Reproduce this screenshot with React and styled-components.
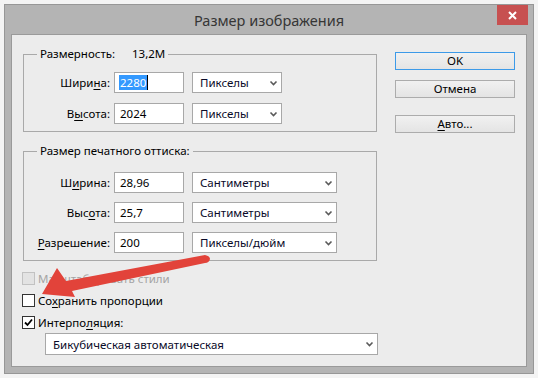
import React from "react";
import styled, { createGlobalStyle } from "styled-components";

const GlobalStyle = createGlobalStyle`
  html, body {
    margin: 0;
    padding: 0;
    background: #f4f4f4;
  }
  body {
    font-family: "Noto Sans", "Open Sans", sans-serif;
  }
  u {
    text-decoration-thickness: 1px;
    text-underline-offset: 2px;
  }
`;

const Page = styled.div`
  position: relative;
  width: 538px;
  height: 378px;
  padding: 4px;
  box-sizing: border-box;
  background: #f4f4f4;
  overflow: hidden;
`;

const Window = styled.div`
  width: 530px;
  height: 370px;
  box-sizing: border-box;
  border: 1px solid #979797;
  background: #b4b4b4;
  padding: 0 6px 6px;
  display: flex;
  flex-direction: column;
`;

const TitleBar = styled.div`
  height: 29px;
  margin: 0 -6px;
  display: grid;
  grid-template-columns: 1fr auto 1fr;
  align-items: start;
`;

const Title = styled.div`
  grid-column: 2;
  font-size: 14.5px;
  line-height: 30px;
  color: #363636;
`;

const CloseButton = styled.div`
  grid-column: 3;
  justify-self: end;
  margin-right: 5px;
  width: 31px;
  height: 20px;
  background: #c75050;
  display: flex;
  align-items: center;
  justify-content: center;
`;

const Client = styled.div`
  flex: 1;
  border: 1px solid #9a9a9a;
  background: #ececec;
  display: flex;
  font-size: 11.5px;
  color: #000;
`;

const LeftCol = styled.div`
  width: 354px;
  padding: 19px 0 0 11px;
`;

const RightCol = styled.div`
  margin-left: 18px;
  padding-top: 17px;
  display: flex;
  flex-direction: column;
`;

const Group = styled.div`
  margin-top: ${(p) => p.$top}px;
  border: 1px solid #a9a9a9;
  padding-bottom: 7px;
`;

const Legend = styled.div`
  margin: -9px 0 0 13px;
  padding: 0 3px;
  width: fit-content;
  background: #ececec;
  line-height: 16px;
  display: flex;
`;

const LegendName = styled.span`
  min-width: ${(p) => p.$w || 0}px;
`;

const Rows = styled.div`
  margin-top: ${(p) => p.$top}px;
  display: flex;
  flex-direction: column;
  gap: ${(p) => p.$gap}px;
`;

const Row = styled.div`
  display: flex;
  align-items: center;
  height: 21px;
`;

const Label = styled.div`
  width: 86px;
  text-align: right;
  line-height: 21px;
`;

const Field = styled.div`
  margin-left: 4px;
  width: 70px;
  height: 21px;
  box-sizing: border-box;
  border: 1px solid #a8a8a8;
  background: #fff;
  padding-left: 5px;
  line-height: 19px;
  display: flex;
  align-items: center;
`;

const Selected = styled.span`
  background: #3399ff;
  color: #fff;
  line-height: 15px;
  padding: 0 1px;
  margin-left: -1px;
  border-right: 1px solid #000;
`;

const SelectBox = styled.div`
  margin-left: ${(p) => (p.$ml ?? 8)}px;
  width: ${(p) => p.$w}px;
  height: ${(p) => p.$h || 21}px;
  box-sizing: border-box;
  border: 1px solid #a8a8a8;
  background: #fff;
  padding: 0 3px 0 7px;
  display: flex;
  align-items: center;
  justify-content: space-between;
  color: #0a0a28;
`;

const Checks = styled.div`
  margin-top: 9px;
  margin-left: -1px;
  display: flex;
  flex-direction: column;
  gap: 6px;
`;

const CheckRow = styled.div`
  height: 16px;
  display: flex;
  align-items: center;
  color: ${(p) => (p.$disabled ? "#a4a4a4" : "#000")};
`;

const Box = styled.div`
  width: 13px;
  height: 13px;
  box-sizing: border-box;
  border: 1px solid ${(p) => (p.$disabled ? "#c2c2c2" : "#333")};
  background: ${(p) => (p.$disabled ? "#e3e3e3" : "#fff")};
  margin-right: 3px;
  display: flex;
  align-items: center;
  justify-content: center;
`;

const Button = styled.div`
  margin-top: ${(p) => p.$top || 0}px;
  width: 120px;
  height: 18px;
  box-sizing: border-box;
  border: 1px solid ${(p) => (p.$primary ? "#3c9ae8" : "#acacac")};
  background: linear-gradient(#f1f1f1, #e4e4e4);
  text-align: center;
  line-height: 16px;
`;

const Annotation = styled.svg`
  position: absolute;
  left: 0;
  top: 0;
  pointer-events: none;
`;

const Chevron = () => (
  <svg width="9" height="6" viewBox="0 0 9 6">
    <path d="M1.5 1.5 L4.5 4.5 L7.5 1.5" fill="none" stroke="#5a5a5a" strokeWidth="1.6" />
  </svg>
);

const Select = ({ children, w, h, ml }) => (
  <SelectBox $w={w} $h={h} $ml={ml}>
    <span>{children}</span>
    <Chevron />
  </SelectBox>
);

const Check = ({ checked, disabled, children }) => (
  <CheckRow $disabled={disabled}>
    <Box $disabled={disabled}>
      {checked && (
        <svg width="9" height="9" viewBox="0 0 9 9">
          <path d="M1 4.5 L3.5 7 L8 1.5" fill="none" stroke="#000" strokeWidth="1.8" />
        </svg>
      )}
    </Box>
    <span>{children}</span>
  </CheckRow>
);

export default function App() {
  return (
    <Page>
      <GlobalStyle />
      <Window>
        <TitleBar>
          <Title>Размер изображения</Title>
          <CloseButton>
            <svg width="9" height="9" viewBox="0 0 9 9">
              <path d="M1 1 L8 8 M8 1 L1 8" stroke="#fff" strokeWidth="2" />
            </svg>
          </CloseButton>
        </TitleBar>
        <Client>
          <LeftCol>
            <Group $top={0}>
              <Legend>
                <LegendName $w={92}>Размерность:</LegendName>
                <span>13,2M</span>
              </Legend>
              <Rows $top={10} $gap={10}>
                <Row>
                  <Label>Шири<u>н</u>а:</Label>
                  <Field>
                    <Selected>2280</Selected>
                  </Field>
                  <Select w={90}>Пикселы</Select>
                </Row>
                <Row>
                  <Label>В<u>ы</u>сота:</Label>
                  <Field>2024</Field>
                  <Select w={90}>Пикселы</Select>
                </Row>
              </Rows>
            </Group>
            <Group $top={19}>
              <Legend>
                <LegendName>Размер печатного оттиска:</LegendName>
              </Legend>
              <Rows $top={13} $gap={9}>
                <Row>
                  <Label>Ш<u>и</u>рина:</Label>
                  <Field>28,96</Field>
                  <Select w={145}>Сантиметры</Select>
                </Row>
                <Row>
                  <Label>Выс<u>о</u>та:</Label>
                  <Field>25,7</Field>
                  <Select w={145}>Сантиметры</Select>
                </Row>
                <Row>
                  <Label><u>Р</u>азрешение:</Label>
                  <Field>200</Field>
                  <Select w={145}>Пикселы/дюйм</Select>
                </Row>
              </Rows>
            </Group>
            <Checks>
              <Check disabled>Масштабировать стили</Check>
              <Check>Со<u>х</u>ранить пропорции</Check>
              <Check checked>Интерпо<u>л</u>яция:</Check>
            </Checks>
            <SelectBox $w={333} $h={22} $ml={22} style={{ marginTop: 3 }}>
              <span>Бикубическая автоматическая</span>
              <Chevron />
            </SelectBox>
          </LeftCol>
          <RightCol>
            <Button $primary>OK</Button>
            <Button $top={10}>Отмена</Button>
            <Button $top={17}><u>А</u>вто...</Button>
          </RightCol>
        </Client>
      </Window>
      <Annotation width="538" height="378" viewBox="0 0 538 378">
        <path
          d="M42 294 L57 268 L66 281 L205 255 Q210 256 210 259 Q209 263 205 263 L72 291 L75 297 Z"
          fill="#e2433a"
        />
      </Annotation>
    </Page>
  );
}
